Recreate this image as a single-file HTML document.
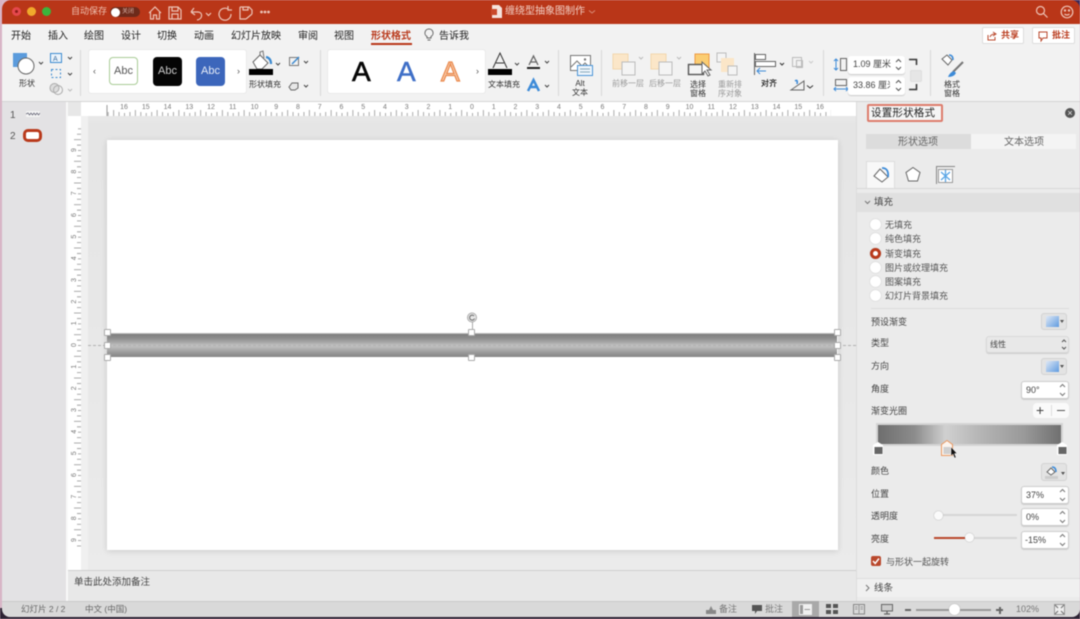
<!DOCTYPE html>
<html><head><meta charset="utf-8">
<style>
html,body{margin:0;padding:0}
body{width:1080px;height:619px;position:relative;overflow:hidden;background:#d9b9c9;font-family:"Liberation Sans","Noto Sans CJK SC",sans-serif;color:#333}
div,span,svg{position:absolute}
#w{left:0;top:0;width:1080px;height:619px;overflow:hidden;background:#d9b9c9;filter:blur(.4px)}
.t{white-space:nowrap;line-height:1}
.tab{top:31px;font-size:10px;color:#222;white-space:nowrap;line-height:11px}
.lab{font-size:8px;color:#333;white-space:nowrap;line-height:9px;text-align:center}
.gl{font-size:8px;color:#999;white-space:nowrap;line-height:9px;text-align:center}
.sep{width:1px;background:#d8d8d8;top:50px;height:46px}
.opt{left:885px;font-size:9px;color:#555;line-height:10px;white-space:nowrap}
.rad{left:870px;width:11px;height:11px;border-radius:50%;background:#fff;box-shadow:0 0 1px #aaa}
.pl{left:871px;font-size:9px;color:#444;line-height:10px;white-space:nowrap}
.box{background:#fff;border:1px solid #ccc;border-radius:3px;box-sizing:border-box;font-size:9px;color:#444;line-height:16px;padding-left:4px;height:18px;box-shadow:0 1px 1px #ccc}
.dd{width:26px;height:17px;background:#e3e3e3;border:1px solid #d2d2d2;border-radius:3px;box-sizing:border-box}
.dd i{position:absolute;left:4px;top:2px;width:13px;height:11px;background:linear-gradient(135deg,#dfe8f5,#5f9be0)}
.dd b{position:absolute;right:2px;top:6px;width:0;height:0;border:2px solid transparent;border-top:3px solid #555}
.h{width:5px;height:5px;background:#fff;border:1px solid #aaa;border-radius:1px}
</style></head><body><div id="w">
<!-- corners -->
<div style="left:1066px;top:0;width:14px;height:10px;background:#3b2a5a"></div>
<div style="left:0;top:606px;width:1080px;height:13px;background:#2d2233"></div>
<!-- app window -->
<div style="left:2px;top:0;width:1078px;height:24px;background:#b93618;border-radius:9px 9px 0 0"></div>
<div style="left:2px;top:24px;width:1078px;height:78px;background:#f2f2f2"></div>
<!-- traffic lights -->
<div style="left:12px;top:7px;width:9px;height:9px;border-radius:50%;background:#e5484d"></div>
<div style="left:15px;top:10px;width:3px;height:3px;border-radius:50%;background:#8e1c18"></div>
<div style="left:27px;top:7px;width:9px;height:9px;border-radius:50%;background:#f0a92c"></div>
<div style="left:42px;top:7px;width:9px;height:9px;border-radius:50%;background:#3cb53c"></div>
<div class="t" style="left:71px;top:7px;font-size:9px;color:#eebfae">自动保存</div>
<div style="left:110px;top:7px;width:30px;height:10px;border-radius:5px;background:#6d2a1a"></div>
<div style="left:111px;top:7.500px;width:9px;height:9px;border-radius:50%;background:#fff"></div>
<div class="t" style="left:122px;top:9px;font-size:6px;color:#d8b0a5">关闭</div>
<svg style="left:146px;top:3px" width="130" height="19" fill="none" stroke="#ecc4b7" stroke-width="1.200">
<path d="M3 10 L9 4 L15 10 M4.500 9 V16 H7.500 V12 H10.500 V16 H13.500 V9"/>
<path d="M23 4 H32 L35 7 V16 H23 Z M26 4 V8 H32 V4 M26 16 V11 H32 V16"/>
<path d="M45 9 H52 C57 9 57 16 51 17 M45 9 L48 5 M45 9 L49 12"/>
<path d="M60 10 L62.500 12.500 L65 10"/>
<path d="M82 6 A6 6 0 1 0 85 11 M82 3 V7 H86"/>
<path d="M94 4 H103 L106 7 V11 M94 4 V16 H100 M97 4 V7 H102 V4 M100 16 L106 11"/>
<circle cx="115.500" cy="9" r=".8" fill="#ecc4b7"/><circle cx="119" cy="9" r=".8" fill="#ecc4b7"/><circle cx="122.500" cy="9" r=".8" fill="#ecc4b7"/>
</svg>
<!-- title -->
<svg style="left:491px;top:5px" width="12" height="14"><path d="M1 0 H8 L11 3 V13 H1 Z" fill="#f5e3dd"/><path d="M0 4 H6 V10 H0 Z" fill="#c9492b"/></svg>
<div class="t" style="left:505px;top:7px;font-size:10px;color:#f1cdc2">缠绕型抽象图制作</div>
<svg style="left:588px;top:9px" width="8" height="6" fill="none" stroke="#d98b75"><path d="M1 1.500 L4 4 L7 1.500"/></svg>
<svg style="left:1034px;top:4px" width="44" height="16" fill="none" stroke="#eec3b6" stroke-width="1.200"><circle cx="6.500" cy="6.500" r="4"/><path d="M9.500 9.500 L13.500 13.500"/><circle cx="33" cy="8" r="5.800"/><circle cx="31" cy="6.500" r=".6"/><circle cx="35" cy="6.500" r=".6"/><path d="M30.500 10 Q33 12 35.500 10"/></svg>
<!-- tabs -->
<div class="tab" style="left:11px">开始</div><div class="tab" style="left:48px">插入</div><div class="tab" style="left:84px">绘图</div><div class="tab" style="left:121px">设计</div><div class="tab" style="left:157px">切换</div><div class="tab" style="left:194px">动画</div><div class="tab" style="left:231px">幻灯片放映</div><div class="tab" style="left:298px">审阅</div><div class="tab" style="left:334px">视图</div>
<div class="tab" style="left:371px;color:#b93a1c;font-weight:bold">形状格式</div>
<div style="left:371px;top:43px;width:41px;height:2px;background:#b93618"></div>
<svg style="left:423px;top:28px" width="12" height="14" fill="none" stroke="#666"><path d="M6 1 A4 4 0 0 1 8 8.500 V10 H4 V8.500 A4 4 0 0 1 6 1 Z M4.500 12 H7.500"/></svg>
<div class="tab" style="left:439px">告诉我</div>
<!-- share buttons -->
<div style="left:982px;top:27px;width:42px;height:17px;background:#fff;border:1px solid #ddd;border-radius:2px;box-sizing:border-box"></div>
<svg style="left:987px;top:31px" width="10" height="10" fill="none" stroke="#b9482c"><path d="M1 4 V9 H8 V6 M3 6 Q4 3 8 3 M6 1 L9 3 L6 5"/></svg>
<div class="t" style="left:1001px;top:31px;font-size:9px;font-weight:bold;color:#b93a1c">共享</div>
<div style="left:1032px;top:27px;width:43px;height:17px;background:#fff;border:1px solid #ddd;border-radius:2px;box-sizing:border-box"></div>
<svg style="left:1038px;top:31px" width="11" height="11" fill="none" stroke="#b9482c"><path d="M1 1 H9 V7 H5 L3 10 V7 H1 Z"/></svg>
<div class="t" style="left:1052px;top:31px;font-size:9px;font-weight:bold;color:#b93a1c">批注</div>
<!-- ribbon: shape group -->
<svg style="left:10px;top:50px" width="70" height="50" fill="none">
<rect x="3" y="3" width="14" height="14" fill="#5b9bdc"/><circle cx="16" cy="16" r="8" fill="#fff" stroke="#666"/>
<path d="M29 12 L31 14 L33 12" stroke="#444"/>
<rect x="40.500" y="3.500" width="11" height="9" stroke="#3c8ad0" fill="#eaf3fb"/><text x="43" y="11" font-size="7" fill="#3c6ea0" stroke="none" font-family="Liberation Sans">A</text>
<path d="M58 7 L60 9 L62 7" stroke="#444"/>
<rect x="41.500" y="19.500" width="9" height="8" stroke="#3c8ad0" stroke-dasharray="2 2"/>
<path d="M58 23 L60 25 L62 23" stroke="#444"/>
<circle cx="44.500" cy="38" r="4.500" stroke="#aaa" fill="#ddd"/><circle cx="48" cy="40" r="4.500" stroke="#aaa"/>
<path d="M58 39 L60 41 L62 39" stroke="#bbb"/>
</svg>
<div class="lab" style="left:19px;top:79px">形状</div>
<div class="sep" style="left:80px"></div>
<!-- style gallery -->
<div style="left:89px;top:50px;width:157px;height:43px;background:#fff;border-radius:2px;box-shadow:0 0 1px #bbb"></div>
<div class="t" style="left:93px;top:67px;font-size:9px;color:#555">‹</div>
<div class="t" style="left:237px;top:67px;font-size:9px;color:#555">›</div>
<div class="t" style="left:109px;top:57px;width:29px;height:28px;border:1px solid #a9cc96;border-radius:4px;box-sizing:border-box;text-align:center;font-size:11px;line-height:26px;color:#555">Abc</div>
<div class="t" style="left:153px;top:57px;width:29px;height:29px;background:#050505;border-radius:4px;text-align:center;font-size:11px;line-height:28px;color:#ccc">Abc</div>
<div class="t" style="left:196px;top:57px;width:29px;height:29px;background:#3c66bb;border-radius:4px;text-align:center;font-size:11px;line-height:28px;color:#e8eef8">Abc</div>
<svg style="left:248px;top:50px" width="66" height="44" fill="none">
<path d="M5 12 L12 5 L20 13 L14 19 H9 Z" stroke="#666" fill="#fff"/><path d="M12 5 V2 L15 1 L16 8" stroke="#777"/><path d="M18 7 Q23 8 23 14" stroke="#3c8ad0" stroke-width="2.200"/>
<rect x="1" y="19" width="24" height="6" fill="#000"/>
<path d="M28 13 L30 15 L32 13" stroke="#444"/>
<rect x="41.500" y="7.500" width="9" height="8" stroke="#777"/><path d="M44 14 L51 7" stroke="#3c8ad0" stroke-width="1.500"/>
<path d="M56 11 L58 13 L60 11" stroke="#444"/>
<path d="M41 37 L44 33 H50 V38 L47 40 H43 Z" stroke="#666" fill="#e8e8e8"/>
<path d="M56 35 L58 37 L60 35" stroke="#444"/>
</svg>
<div class="lab" style="left:249px;top:80px">形状填充</div>
<div class="sep" style="left:320px"></div>
<!-- WordArt gallery -->
<div style="left:328px;top:50px;width:157px;height:43px;background:#fff;border-radius:2px;box-shadow:0 0 1px #bbb"></div>
<div class="t" style="left:352px;top:58px;font-size:28px;color:#080808;-webkit-text-stroke:.6px #000">A</div>
<div class="t" style="left:397px;top:58px;font-size:28px;color:#3f6fc7;-webkit-text-stroke:.5px #3f6fc7">A</div>
<div class="t" style="left:441px;top:58px;font-size:28px;color:#f7c9a8;-webkit-text-stroke:1.200px #ea8a4e">A</div>
<div class="t" style="left:476px;top:67px;font-size:9px;color:#555">›</div>
<svg style="left:486px;top:50px" width="70" height="46" fill="none">
<path d="M7 18 L14 3 L21 18 M10 13 H18" stroke="#333"/><rect x="2" y="19" width="24" height="6" fill="#000"/>
<path d="M29 13 L31 15 L33 13" stroke="#444"/>
<path d="M43 15 L47.500 6 L52 15 M44.500 12 H51" stroke="#666" stroke-width="1.300"/><rect x="41" y="17" width="13" height="2" fill="#222"/>
<path d="M59 11 L61 13 L63 11" stroke="#444"/>
<path d="M42 41 L47.500 30 L53 41 M44 37 H51" stroke="#3d8bd8" stroke-width="2.500"/>
<path d="M59 35 L61 37 L63 35" stroke="#444"/>
</svg>
<div class="lab" style="left:488px;top:80px">文本填充</div>
<div class="sep" style="left:558px"></div>
<!-- Alt -->
<svg style="left:568px;top:54px" width="26" height="24" fill="none"><rect x="2.500" y="1.500" width="20" height="15" stroke="#777" fill="#fff"/><path d="M3 13 L9 7 L14 12 L17 9 L22 14" stroke="#777"/><circle cx="17" cy="5.500" r="1.200" fill="#777"/><rect x="9.500" y="11.500" width="15" height="10" stroke="#4a94d6" fill="#eef5fc"/><path d="M12 15 H22 M12 18 H22" stroke="#8ab"/></svg>
<div class="lab" style="left:572px;top:79px">Alt<br>文本</div>
<div class="sep" style="left:601px"></div>
<!-- arrange -->
<svg style="left:610px;top:50px" width="130" height="40" fill="none">
<rect x="3" y="4" width="15" height="15" fill="#fbe6c8" stroke="#f3d6ad"/><rect x="12" y="12" width="13" height="13" fill="#f4f4f4" stroke="#bbb"/>
<path d="M29 7 L31 9 L33 7" stroke="#bbb"/>
<rect x="41" y="4" width="15" height="15" fill="#fbe6c8" stroke="#f3d6ad"/><rect x="49" y="12" width="13" height="13" fill="#f4f4f4" stroke="#bbb"/>
<path d="M67 7 L69 9 L71 7" stroke="#bbb"/>
<rect x="85" y="4" width="14" height="16" fill="#fbcd72" stroke="#ee9a42"/><rect x="78.500" y="14.500" width="15" height="10" fill="#f4f4f4" stroke="#555" stroke-width="1.400"/><path d="M92 12 V24 L95 21 L98 26 L100 25 L97 20 L101 20 Z" fill="#fff" stroke="#666"/>
<rect x="107" y="3" width="9" height="9" fill="#f4f4f4" stroke="#bbb"/><rect x="111" y="8" width="13" height="14" fill="#fbe6c8"/><rect x="118" y="16" width="9" height="9" fill="#f4f4f4" stroke="#bbb"/>
</svg>
<svg style="left:752px;top:50px" width="62" height="46" fill="none">
<path d="M2.500 3 V25" stroke="#666"/><rect x="3.500" y="4.500" width="10" height="5" stroke="#666" fill="#fff"/><rect x="3.500" y="11.500" width="20" height="5" stroke="#666" fill="#fff"/><path d="M14 21 H5 M8 18 L5 21 L8 24" stroke="#3d8bd8"/>
<path d="M28 13 L30 15 L32 13" stroke="#333"/>
<rect x="40.500" y="7.500" width="9" height="9" stroke="#bbb"/><rect x="44.500" y="10.500" width="6" height="7" stroke="#bbb"/>
<path d="M57 11 L59 13 L61 11" stroke="#ccc"/>
<path d="M39 40 L52 31 V40 Z" stroke="#666"/><path d="M43 31 Q46 29 45 34" stroke="#3d8bd8" stroke-width="1.600"/>
</svg>
<svg style="left:806px;top:84px" width="8" height="6" fill="none"><path d="M1 1.500 L4 4 L7 1.500" stroke="#333"/></svg>
<div class="gl" style="left:612px;top:79px">前移一层</div>
<div class="gl" style="left:649px;top:79px">后移一层</div>
<div class="lab" style="left:690px;top:80px;color:#333">选择<br>窗格</div>
<div class="gl" style="left:718px;top:80px">重新排<br>序对象</div>
<div class="lab" style="left:761px;top:79px;color:#333;font-weight:bold">对齐</div>
<div class="sep" style="left:823px"></div>
<!-- size -->
<svg style="left:832px;top:56px" width="90" height="40" fill="none">
<path d="M4 3 V14 M2 5 L4 3 L6 5 M2 12 L4 14 L6 12" stroke="#3d8bd8"/><rect x="8.500" y="2.500" width="6" height="12" stroke="#666"/>
<rect x="3.500" y="23.500" width="11" height="6" stroke="#666"/><path d="M2 33 H16 M4 31 L2 33 L4 35 M14 31 L16 33 L14 35" stroke="#3d8bd8"/>
<path d="M77 3.500 H84.500 V9" stroke="#333" stroke-width="1.500"/><path d="M77 33.500 H84.500 V28" stroke="#333" stroke-width="1.500"/>
</svg>
<div class="box" style="left:848px;top:56px;width:57px;border:none;line-height:17px;padding-left:5px;font-size:9px">1.09 厘米</div>
<div class="box" style="left:848px;top:77px;width:57px;border:none;line-height:17px;padding-left:5px;font-size:9px;overflow:hidden">33.86 厘米</div>
<div style="left:890px;top:78px;width:14px;height:15px;background:#fff"></div>
<svg style="left:894px;top:57px" width="9" height="38" fill="none" stroke="#555"><path d="M2 5 L4.500 2.500 L7 5 M2 10 L4.500 12.500 L7 10 M2 26 L4.500 23.500 L7 26 M2 31 L4.500 33.500 L7 31"/></svg>
<div style="left:910px;top:70px;width:10px;height:10px;background:#e6e6e6;border:1px solid #ddd;border-radius:2px"></div>
<div class="sep" style="left:930px"></div>
<svg style="left:940px;top:52px" width="28" height="28" fill="none"><path d="M2 7 L7 3 L12 8 L8 13 Z" stroke="#666" fill="#fff"/><path d="M9 3 Q13 3 13 8" stroke="#3d8bd8" stroke-width="1.600"/><path d="M23 10 L13 20" stroke="#777" stroke-width="2"/><path d="M14 19 Q10 20 8 25 Q14 25 16 21 Z" fill="#3d8bd8"/></svg>
<div class="lab" style="left:944px;top:80px;color:#333">格式<br>窗格</div>
<!-- content bg -->
<div style="left:2px;top:102px;width:1078px;height:499px;background:#e7e7e7"></div>
<div style="left:2px;top:101px;width:1078px;height:1px;background:#d4d4d4"></div>
<!-- left panel -->
<div style="left:2px;top:102px;width:64px;height:499px;background:#e3e2e4"></div>
<div style="left:66px;top:102px;width:2px;height:499px;background:#f8f8f8"></div>
<div class="t" style="left:10px;top:111px;font-size:10px;color:#555">1</div>
<div class="t" style="left:10px;top:132px;font-size:10px;color:#555">2</div>
<div style="left:26px;top:111px;width:14px;height:6px;background:#f4f4f4;border-radius:1px"></div>
<svg style="left:26px;top:111px" width="14" height="6" fill="none"><path d="M0 3 L2 2 L3.500 4 L5 2 L6.500 4 L8 2 L9.500 4 L11 2 L12.500 4 L14 2" stroke="#667" stroke-width=".8"/></svg>
<div style="left:23px;top:129px;width:19px;height:13px;box-sizing:border-box;background:#fff;border:3px solid #b93a1c;border-radius:5px"></div>
<!-- rulers -->
<div style="left:68px;top:102px;width:788px;height:14px;background:#e7e7e7"></div>
<div style="left:81px;top:102px;width:775px;height:14px;background:#fff"></div>
<div style="left:68px;top:116px;width:13px;height:454px;background:#fff"></div>
<div style="left:81px;top:116px;width:7px;height:454px;background:#f0f0f0"></div>
<svg style="left:81px;top:102px" width="775" height="14">
<defs><pattern id="hp" patternUnits="userSpaceOnUse" width="21.750" height="14" x="43"><path d="M.5 11 V14 M5.940 10 V14 M11.380 8 V14 M16.800 10 V14" stroke="#aaa" fill="none"/></pattern></defs>
<rect x="26" width="724" height="14" fill="url(#hp)"/>
<path d="M26 3 V14" stroke="#999"/>
<g font-size="7" fill="#777" font-family="Liberation Sans" text-anchor="middle"><text x="43" y="7">16</text><text x="64.750" y="7">15</text><text x="86.500" y="7">14</text><text x="108.250" y="7">13</text><text x="130" y="7">12</text><text x="151.750" y="7">11</text><text x="173.500" y="7">10</text><text x="195.250" y="7">9</text><text x="217" y="7">8</text><text x="238.750" y="7">7</text><text x="260.500" y="7">6</text><text x="282.250" y="7">5</text><text x="304" y="7">4</text><text x="325.750" y="7">3</text><text x="347.500" y="7">2</text><text x="369.250" y="7">1</text><text x="391" y="7">0</text><text x="412.750" y="7">1</text><text x="434.500" y="7">2</text><text x="456.250" y="7">3</text><text x="478" y="7">4</text><text x="499.750" y="7">5</text><text x="521.500" y="7">6</text><text x="543.250" y="7">7</text><text x="565" y="7">8</text><text x="586.750" y="7">9</text><text x="608.500" y="7">10</text><text x="630.250" y="7">11</text><text x="652" y="7">12</text><text x="673.750" y="7">13</text><text x="695.500" y="7">14</text><text x="717.250" y="7">15</text><text x="739" y="7">16</text></g></svg>
<svg style="left:68px;top:116px" width="14" height="454">
<defs><pattern id="vp" patternUnits="userSpaceOnUse" width="14" height="21.670" y="34"><path d="M10 .5 H13 M9 5.900 H13 M6 11.300 H13 M9 16.800 H13" stroke="#aaa" fill="none"/></pattern></defs>
<rect y="12" width="14" height="422" fill="url(#vp)"/>
<g font-size="7" fill="#777" font-family="Liberation Sans" text-anchor="middle"><text transform="translate(8,34) rotate(-90)">9</text><text transform="translate(8,55.700) rotate(-90)">8</text><text transform="translate(8,77.300) rotate(-90)">7</text><text transform="translate(8,99) rotate(-90)">6</text><text transform="translate(8,120.700) rotate(-90)">5</text><text transform="translate(8,142.300) rotate(-90)">4</text><text transform="translate(8,164) rotate(-90)">3</text><text transform="translate(8,185.700) rotate(-90)">2</text><text transform="translate(8,207.300) rotate(-90)">1</text><text transform="translate(8,229) rotate(-90)">0</text><text transform="translate(8,250.700) rotate(-90)">1</text><text transform="translate(8,272.300) rotate(-90)">2</text><text transform="translate(8,294) rotate(-90)">3</text><text transform="translate(8,315.700) rotate(-90)">4</text><text transform="translate(8,337.300) rotate(-90)">5</text><text transform="translate(8,359) rotate(-90)">6</text><text transform="translate(8,380.700) rotate(-90)">7</text><text transform="translate(8,402.300) rotate(-90)">8</text><text transform="translate(8,424) rotate(-90)">9</text></g></svg>
<!-- workspace -->
<div style="left:88px;top:122px;width:768px;height:448px;background:linear-gradient(180deg,#e5e5e5,#ebebeb)"></div>
<div style="left:107px;top:140px;width:731px;height:410px;background:#fff;box-shadow:0 1px 6px rgba(0,0,0,.14)"></div>
<!-- shape -->
<div style="left:107px;top:333px;width:730px;height:24px;background:linear-gradient(180deg,#7d7d7d 0%,#8f8f8f 20%,#a9a9a9 37%,#c2c2c2 50%,#b0b0b0 65%,#9a9a9a 80%,#858585 100%);border-top:1px solid #bbb;box-sizing:border-box"></div>
<div style="left:88px;top:345px;width:768px;height:0;border-top:1px dashed #b2b2b2"></div>
<div class="h" style="left:103.500px;top:329px"></div><div class="h" style="left:468px;top:329px"></div><div class="h" style="left:833.500px;top:329px"></div>
<div class="h" style="left:103.500px;top:341.500px"></div><div class="h" style="left:833.500px;top:341.500px"></div>
<div class="h" style="left:103.500px;top:354px"></div><div class="h" style="left:468px;top:354px"></div><div class="h" style="left:833.500px;top:354px"></div>
<div style="left:471.500px;top:322px;width:1px;height:8px;background:#aaa"></div>
<svg style="left:467px;top:312px" width="10" height="11" fill="none"><circle cx="5" cy="5.500" r="4.500" fill="#e8e8e8" stroke="#aaa"/><path d="M7 4 A2.500 2.500 0 1 0 7.500 6.500" stroke="#666"/></svg>
<!-- notes -->
<div style="left:68px;top:570px;width:788px;height:1px;background:#cfcfcf"></div>
<div style="left:68px;top:571px;width:788px;height:30px;background:#e8e8e8"></div>
<div class="t" style="left:74px;top:578px;font-size:9.500px;color:#444">单击此处添加备注</div>
<!-- right panel -->
<div style="left:856px;top:102px;width:224px;height:499px;background:#ebebeb;border-left:1px solid #dcdcdc;box-sizing:border-box"></div>
<div class="t" style="left:867px;top:104px;width:76px;height:18px;box-sizing:border-box;border:2px solid #dd7c6c;border-radius:2px;background:#f5f5f5;font-size:10.500px;line-height:14px;padding-left:2px;color:#222;letter-spacing:.2px">设置形状格式</div>
<div style="left:1065px;top:108px;width:10px;height:10px;border-radius:50%;background:#555"></div>
<div class="t" style="left:1065px;top:108px;width:10px;height:10px;text-align:center;font-size:9px;line-height:10px;color:#eee">×</div>
<div style="left:866px;top:134px;width:105px;height:15px;background:#dcdcdc"></div>
<div style="left:971px;top:134px;width:105px;height:15px;background:#f4f4f4"></div>
<div class="t" style="left:898px;top:138px;font-size:10px;color:#666">形状选项</div>
<div class="t" style="left:1004px;top:138px;font-size:10px;color:#666">文本选项</div>
<div style="left:866px;top:161px;width:29px;height:27px;background:#f8f8f8;border:1px solid #ddd;border-bottom:none;box-sizing:border-box"></div>
<div style="left:857px;top:188px;width:223px;height:1px;background:#d8d8d8"></div>
<svg style="left:870px;top:164px" width="90" height="22" fill="none">
<path d="M4 12 L10 5 L18 13 L12 18 Z" stroke="#666" fill="#fff"/><path d="M12 4 Q19 4 18 13" stroke="#3d8bd8" stroke-width="1.800"/>
<path d="M43 3.500 L50 8.500 L47.500 17 H38.500 L36 8.500 Z" stroke="#666" fill="#fff"/>
<rect x="68.500" y="5.500" width="14" height="13" stroke="#999" fill="#fff"/><path d="M66 2.500 H85 M66.500 2 V20" stroke="#888"/><path d="M71 8 L80 16 M80 8 L71 16 M75.500 6 V18" stroke="#5aa5e5" stroke-width="1.300"/>
</svg>
<div style="left:857px;top:193px;width:223px;height:19px;background:#e0e0e0"></div>
<svg style="left:864px;top:200px" width="7" height="5" fill="none"><path d="M1 1 L3.500 3.500 L6 1" stroke="#777"/></svg>
<div class="t" style="left:874px;top:198px;font-size:9.500px;color:#444">填充</div>
<div class="rad" style="top:219px"></div><div class="opt" style="top:220px">无填充</div>
<div class="rad" style="top:233px"></div><div class="opt" style="top:234px">纯色填充</div>
<div class="rad" style="top:248px;width:5px;height:5px;border:3px solid #b93a1c"></div><div class="opt" style="top:249px">渐变填充</div>
<div class="rad" style="top:262px"></div><div class="opt" style="top:263px">图片或纹理填充</div>
<div class="rad" style="top:276px"></div><div class="opt" style="top:277px">图案填充</div>
<div class="rad" style="top:290px"></div><div class="opt" style="top:291px">幻灯片背景填充</div>
<div style="left:871px;top:308px;width:198px;height:1px;background:#dcdcdc"></div>
<div class="pl" style="top:317px">预设渐变</div><div class="dd" style="left:1041px;top:313px"><i></i><b></b></div>
<div class="pl" style="top:338px">类型</div>
<div class="box" style="left:986px;top:336px;width:83px;height:17px;background:#e8e8e8;font-size:8px;line-height:15px;padding-left:3px;border-color:#d8d8d8">线性</div>
<svg style="left:1061px;top:338px" width="6" height="13" fill="none" stroke="#555"><path d="M1 4 L3 2 L5 4 M1 9 L3 11 L5 9"/></svg>
<div class="pl" style="top:361px">方向</div><div class="dd" style="left:1041px;top:358px"><i></i><b></b></div>
<div class="pl" style="top:384px">角度</div>
<div class="box" style="left:1021px;top:381px;width:48px">90°</div>
<div class="pl" style="top:406px">渐变光圈</div>
<div style="left:1033px;top:403px;width:36px;height:15px;background:#fafafa;border-radius:4px"></div>
<div class="t" style="left:1036px;top:403px;font-size:14px;color:#444">+</div>
<div style="left:1057px;top:410px;width:8px;height:1px;background:#555"></div>
<div style="left:1051px;top:405px;width:1px;height:11px;background:#ddd"></div>
<!-- gradient bar -->
<div style="left:876px;top:423px;width:187px;height:23px;box-sizing:border-box;border:2px solid #d4d4d4;background:linear-gradient(90deg,#6e6e6e 0%,#8c8c8c 20%,#d0d0d0 37%,#b6b6b6 55%,#999 80%,#707070 100%)"></div>
<svg style="left:870px;top:439px" width="200" height="20"><path d="M3 6 L8 3 L13 6 V16 H3 Z" fill="#fff"/><rect x="4.500" y="8" width="8" height="7" fill="#666"/><path d="M187 6 L192 3 L197 6 V16 H187 Z" fill="#fff"/><rect x="188.500" y="8" width="8" height="7" fill="#666"/><path d="M71.500 5.500 L77 1.500 L82.500 5.500 V16.500 H71.500 Z" fill="#fbf4ee" stroke="#ea9a64"/><rect x="73.500" y="8" width="7" height="7" fill="#cfcfcf"/><path d="M81 8 V17 L83 15 L84.500 19 L86 18.500 L84.500 14.500 L87 14.500 Z" fill="#111" stroke="#fff" stroke-width=".4"/></svg>
<div class="pl" style="top:466px">颜色</div>
<div style="left:1041px;top:463px;width:26px;height:18px;background:#e3e3e3;border:1px solid #d2d2d2;border-radius:3px;box-sizing:border-box"></div>
<svg style="left:1045px;top:464px" width="20" height="16" fill="none"><path d="M2 8 L6 4 L10 8 L6 11 Z" stroke="#666" fill="#fff"/><path d="M7 3 Q11 3 11 8" stroke="#3d8bd8" stroke-width="1.500"/><rect x="0" y="12" width="13" height="3" fill="#ccc"/><path d="M16 8 H20 L18 11 Z" fill="#555"/></svg>
<div class="pl" style="top:489px">位置</div><div class="box" style="left:1021px;top:486px;width:48px">37%</div>
<div class="pl" style="top:511px">透明度</div><div class="box" style="left:1021px;top:508px;width:48px">0%</div>
<div class="pl" style="top:534px">亮度</div><div class="box" style="left:1021px;top:531px;width:48px;padding-left:3px">-15%</div>
<svg style="left:1057px;top:381px" width="11" height="170" fill="none" stroke="#777"><path d="M3 6 L5.500 3.500 L8 6 M3 12 L5.500 14.500 L8 12 M3 111 L5.500 108.500 L8 111 M3 117 L5.500 119.500 L8 117 M3 133 L5.500 130.500 L8 133 M3 139 L5.500 141.500 L8 139 M3 156 L5.500 153.500 L8 156 M3 162 L5.500 164.500 L8 162"/></svg>
<div style="left:934px;top:514px;width:83px;height:2px;background:#d6d6d6"></div>
<div style="left:934px;top:537px;width:83px;height:2px;background:#d6d6d6"></div>
<div style="left:934px;top:537px;width:32px;height:2px;background:#b9482c"></div>
<div style="left:934px;top:511px;width:9px;height:9px;border-radius:50%;background:#fafafa;box-shadow:0 0 1px #888"></div>
<div style="left:965px;top:533px;width:9px;height:9px;border-radius:50%;background:#fafafa;box-shadow:0 0 1px #888"></div>
<div style="left:871px;top:556px;width:10px;height:10px;background:#b9482c;border-radius:2px"></div>
<svg style="left:871px;top:556px" width="10" height="10" fill="none"><path d="M2 5 L4.200 7.500 L8 2.500" stroke="#fff" stroke-width="1.500"/></svg>
<div class="opt" style="left:886px;top:557px">与形状一起旋转</div>
<div style="left:857px;top:578px;width:223px;height:1px;background:#dcdcdc"></div>
<div style="left:857px;top:579px;width:223px;height:18px;background:#f0f0f0"></div>
<svg style="left:865px;top:584px" width="5" height="8" fill="none"><path d="M1 1 L4 4 L1 7" stroke="#777"/></svg>
<div class="t" style="left:874px;top:584px;font-size:9.500px;color:#444">线条</div>
<!-- status -->
<div style="left:2px;top:601px;width:1078px;height:16px;background:#d9d9d9;border-top:1px solid #cacaca;box-sizing:border-box;border-radius:0 0 8px 8px"></div>
<div class="t" style="left:21px;top:605px;font-size:8.500px;color:#666">幻灯片 2 / 2</div>
<div class="t" style="left:85px;top:605px;font-size:8.500px;color:#666">中文 (中国)</div>
<svg style="left:705px;top:604px" width="12" height="11" fill="none"><path d="M1 10 V6 H11 V10 Z M4 6 L6 2 L8 6" fill="#888"/></svg>
<div class="t" style="left:719px;top:605px;font-size:9px;color:#777">备注</div>
<svg style="left:751px;top:604px" width="12" height="11"><path d="M1 1 H11 V7 H6 L4 10 V7 H1 Z" fill="#555"/></svg>
<div class="t" style="left:765px;top:605px;font-size:9px;color:#777">批注</div>
<div style="left:792px;top:601px;width:27px;height:16px;background:#a9a9a9"></div>
<svg style="left:799px;top:604px" width="13" height="11" fill="none"><rect x=".5" y=".5" width="12" height="10" fill="#f0f0f0" stroke="#eee"/><rect x="1" y="1" width="3" height="9" fill="#999"/><path d="M5.500 5.500 H11" stroke="#999"/></svg>
<svg style="left:826px;top:604px" width="13" height="11"><rect width="5" height="4" fill="#555"/><rect x="7" width="5" height="4" fill="#555"/><rect y="6" width="5" height="4" fill="#555"/><rect x="7" y="6" width="5" height="4" fill="#555"/></svg>
<svg style="left:853px;top:604px" width="13" height="11" fill="none"><rect x=".5" y=".5" width="11" height="9.500" stroke="#888"/><path d="M6 .5 V10 M2 3 H4.500 M2 5 H4.500 M7.500 3 H10 M7.500 5 H10" stroke="#999"/></svg>
<svg style="left:881px;top:604px" width="12" height="11" fill="none"><rect x=".5" y=".5" width="11" height="6.500" fill="#ccc" stroke="#666"/><path d="M6 7 V10 M3 10 H9" stroke="#666" stroke-width="1.300"/></svg>
<div style="left:905px;top:609px;width:6px;height:2px;background:#666"></div>
<div style="left:916px;top:609px;width:75px;height:2px;background:#999"></div>
<div style="left:949px;top:604px;width:11px;height:11px;border-radius:50%;background:#fff;box-shadow:0 0 1px #888"></div>
<div style="left:996px;top:609px;width:7px;height:2px;background:#666"></div><div style="left:998.500px;top:606.500px;width:2px;height:7px;background:#666"></div>
<div class="t" style="left:1016px;top:605px;font-size:9px;color:#777">102%</div>
<svg style="left:1054px;top:604px" width="12" height="11" fill="none"><rect x=".5" y=".5" width="10" height="10" fill="#eee" stroke="#999"/><path d="M1 1 L4 4 M10 1 L7 4 M1 10 L4 7 M10 10 L7 7" stroke="#777" stroke-width="1.200"/></svg>
<div style="left:0;top:0;width:2px;height:608px;background:#d8b4c6"></div>
</div></body></html>
